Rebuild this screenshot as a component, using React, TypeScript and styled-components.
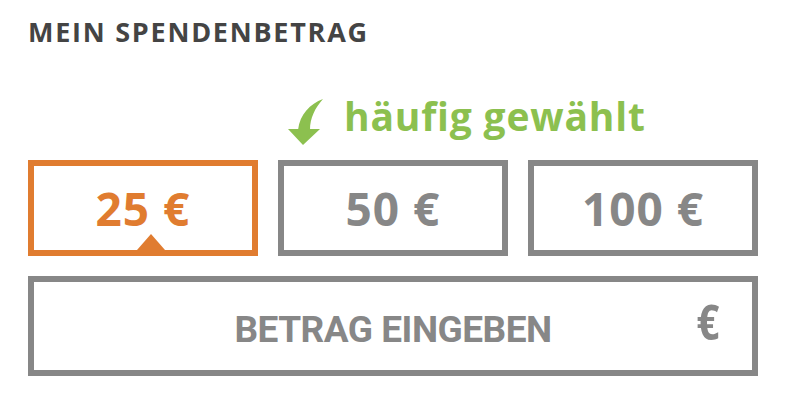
import React, { useState } from 'react';
import styled, { createGlobalStyle } from 'styled-components';

const GlobalStyle = createGlobalStyle`
  body {
    margin: 0;
    background: #ffffff;
    font-family: 'Open Sans', 'Noto Sans', sans-serif;
  }
`;

const orange = '#e07c30';
const grey = '#878787';
const green = '#8cc04f';

const Wrapper = styled.div`
  width: 730px;
  padding: 16px 0 0 28px;
`;

const Title = styled.h2`
  margin: 0;
  font-family: 'Open Sans', sans-serif;
  font-size: 27px;
  font-weight: 700;
  line-height: 32px;
  color: #444444;
  letter-spacing: 1.75px;
`;

const Hint = styled.div`
  display: flex;
  align-items: flex-end;
  gap: 20px;
  margin: 44px 0 0 260px;
  height: 48px;
`;

const HintText = styled.span`
  font-family: 'Open Sans', sans-serif;
  font-size: 39px;
  font-weight: 700;
  line-height: 48px;
  color: ${green};
  letter-spacing: 0.8px;
`;

const AmountRow = styled.div`
  display: grid;
  grid-template-columns: repeat(3, 230px);
  gap: 20px;
  margin-top: 20px;
`;

const AmountButton = styled.button<{ $active?: boolean }>`
  position: relative;
  height: 96px;
  box-sizing: border-box;
  border: 6px solid ${({ $active }) => ($active ? orange : grey)};
  background: #ffffff;
  color: ${({ $active }) => ($active ? orange : grey)};
  font-family: 'Open Sans', sans-serif;
  font-size: 46px;
  font-weight: 700;
  letter-spacing: 1px;
  padding: 0;
  cursor: pointer;
`;

const Pointer = styled.span`
  position: absolute;
  left: 103px;
  bottom: 0;
  width: 0;
  height: 0;
  border-left: 14px solid transparent;
  border-right: 14px solid transparent;
  border-bottom: 16px solid ${orange};
`;

const CustomField = styled.label`
  display: flex;
  align-items: center;
  box-sizing: border-box;
  height: 100px;
  margin-top: 20px;
  border: 6px solid ${grey};
  padding: 0 30px 0 55px;
`;

const CustomInput = styled.input`
  flex: 1;
  min-width: 0;
  border: none;
  outline: none;
  background: transparent;
  text-align: center;
  padding: 6px 0 0;
  font-family: Roboto, 'Open Sans', sans-serif;
  font-size: 37px;
  font-weight: 700;
  letter-spacing: -0.5px;
  color: ${grey};
  &::placeholder {
    color: ${grey};
    opacity: 1;
  }
`;

const Currency = styled.span`
  width: 25px;
  font-family: 'Open Sans', sans-serif;
  font-stretch: 75%;
  font-size: 49px;
  font-weight: 700;
  line-height: 1;
  color: ${grey};
  margin-top: -10px;
`;

const CurvedArrow = () => (
  <svg width="36" height="48" viewBox="0 0 36 48" style={{ marginBottom: -6 }}>
    <path d="M35 1 C 22 6, 12 16, 10 32 L 22 32 C 22 20, 27 10, 35 1 Z" fill={green} />
    <polygon points="0,31 32,31 15,47" fill={green} />
  </svg>
);

const amounts = [25, 50, 100];

const App = () => {
  const [selected, setSelected] = useState<number>(25);

  return (
    <>
      <GlobalStyle />
      <Wrapper>
        <Title>MEIN SPENDENBETRAG</Title>
        <Hint>
          <CurvedArrow />
          <HintText>häufig gewählt</HintText>
        </Hint>
        <AmountRow>
          {amounts.map((a) => (
            <AmountButton key={a} $active={selected === a} onClick={() => setSelected(a)}>
              {a} €
              {selected === a && <Pointer />}
            </AmountButton>
          ))}
        </AmountRow>
        <CustomField>
          <CustomInput placeholder="BETRAG EINGEBEN" />
          <Currency>€</Currency>
        </CustomField>
      </Wrapper>
    </>
  );
};

export default App;
